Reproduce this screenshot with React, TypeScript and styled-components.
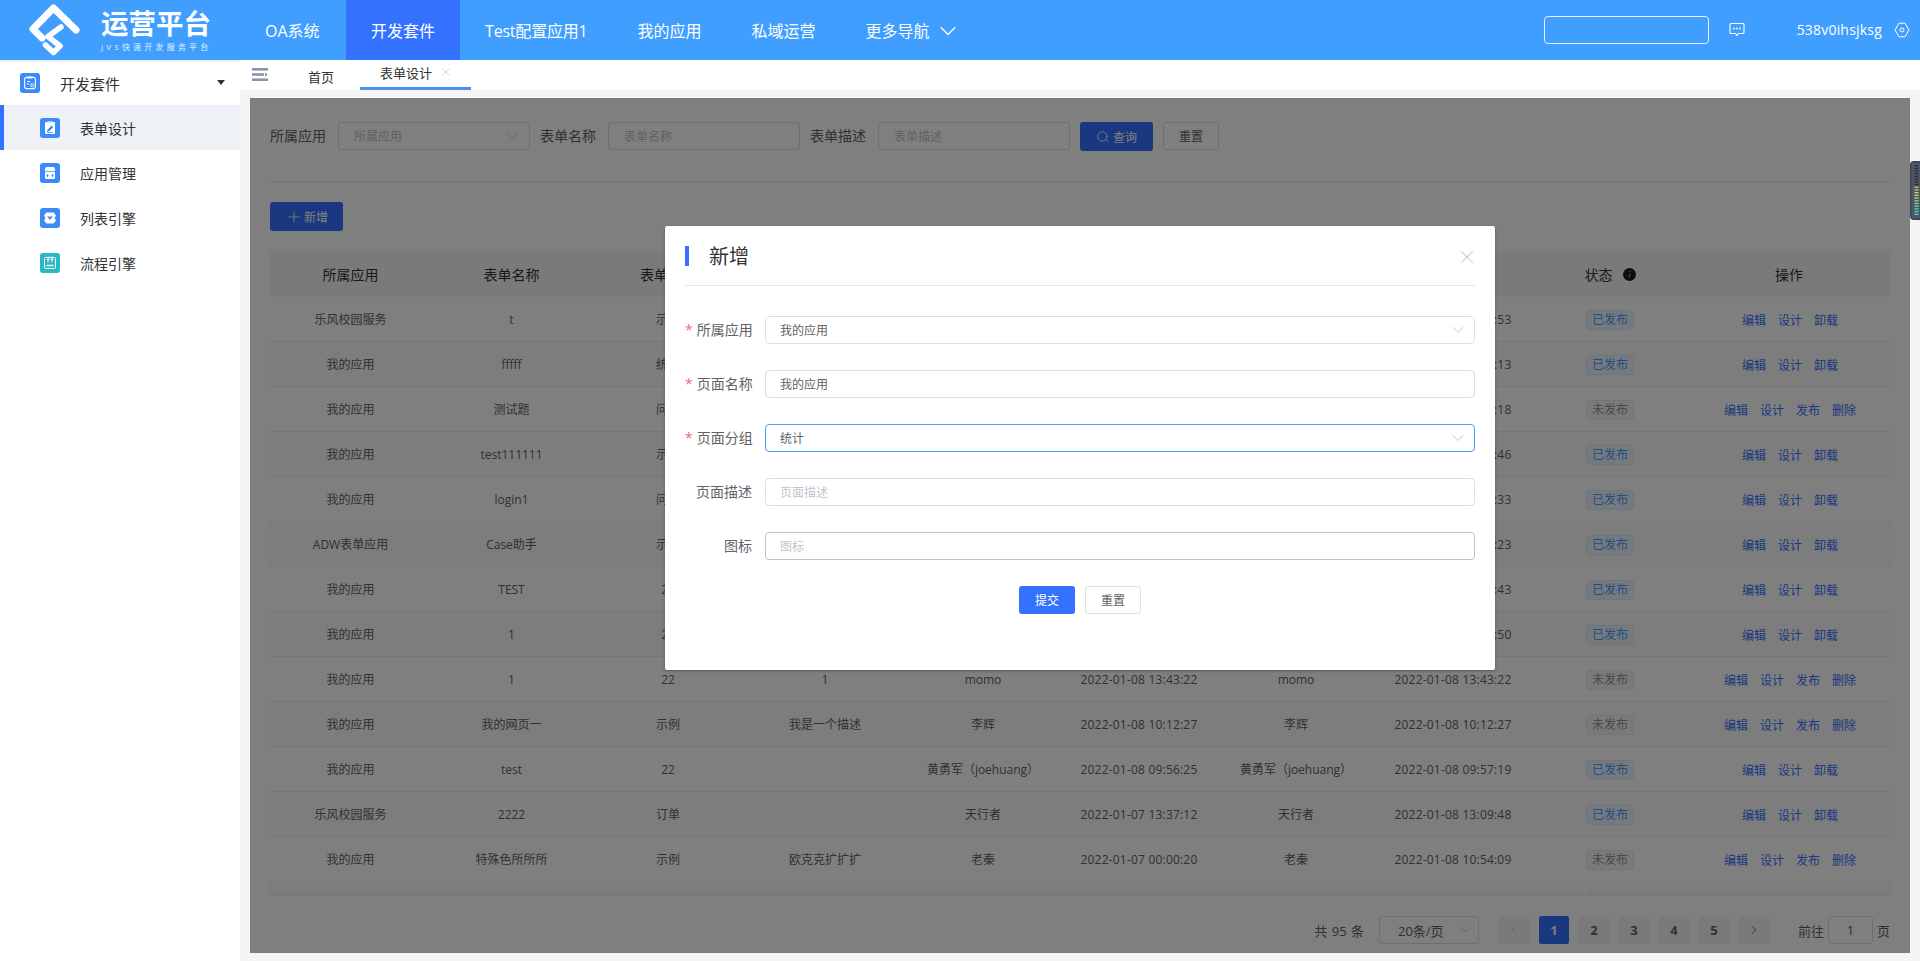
import React from 'react';
import styled, { createGlobalStyle } from 'styled-components';
import { ChevronDown, ChevronLeft, ChevronRight, Plus, Search, X } from 'lucide-react';

const FONT = `"Open Sans", "Noto Sans CJK SC", sans-serif`;
const PRIMARY = '#3471ff';
const COLUMNS = '161px 161px 152px 162px 154px 158px 156px 158px 156px 202px';

const Global = createGlobalStyle`
  * { box-sizing: border-box; }
  html, body { margin: 0; padding: 0; height: 100%; }
  body { font-family: ${FONT}; background: #f5f5f5; overflow: hidden; }
`;

const Page = styled.div`
  width: 1920px;
  height: 961px;
  display: grid;
  grid-template-rows: 60px 1fr;
  grid-template-columns: 240px 1fr;
  position: relative;
  overflow: hidden;
`;

const Header = styled.header`
  grid-column: 1 / 3;
  background: #409eff;
  display: flex;
  align-items: stretch;
  color: #fff;
`;
const LogoBox = styled.div`
  width: 240px;
  display: flex;
  align-items: center;
  padding-left: 29px;
  gap: 21px;
`;
const LogoText = styled.div`
  display: flex;
  flex-direction: column;
  margin-top: 1px;
`;
const LogoTitle = styled.div`
  font-size: 27.5px;
  font-weight: 700;
  line-height: 30px;
  white-space: nowrap;
`;
const LogoSub = styled.div`
  font-size: 8px;
  line-height: 10px;
  margin-top: 3px;
  letter-spacing: 3.2px;
  white-space: nowrap;
  opacity: 0.85;
`;
const NavItem = styled.div<{ $active?: boolean; $min?: number; $spacing?: number }>`
  display: flex;
  align-items: center;
  gap: 4px;
  min-width: ${p => p.$min ?? 0}px;
  padding: 1px 25px 0;
  font-size: 16px;
  line-height: 24px;
  letter-spacing: ${p => p.$spacing ?? 0}px;
  white-space: nowrap;
  background: ${p => (p.$active ? PRIMARY : 'transparent')};
`;
const HeaderRight = styled.div`
  margin-left: auto;
  display: flex;
  align-items: center;
  padding-right: 10px;
`;
const HeaderSearch = styled.div`
  width: 165px;
  height: 28px;
  border: 1px solid #e8f2ff;
  border-radius: 4px;
  margin-right: 20px;
`;
const UserName = styled.div`
  font-size: 14px;
  line-height: 20px;
  letter-spacing: 0.2px;
  margin-left: 52px;
  margin-right: 12px;
  white-space: nowrap;
`;

const Sidebar = styled.aside`
  background: #fff;
  box-shadow: inset 0 3px 3px -2px rgba(0, 0, 0, 0.12);
`;
const SideGroup = styled.div`
  height: 45px;
  display: flex;
  align-items: center;
  padding: 0 15px 0 20px;
  font-size: 15px;
  color: #333;
  gap: 20px;
`;
const GroupName = styled.span`
  padding-top: 2px;
`;
const Caret = styled.div`
  margin-left: auto;
  width: 0;
  height: 0;
  border-left: 4.5px solid transparent;
  border-right: 4.5px solid transparent;
  border-top: 5px solid #303133;
`;
const SideItem = styled.div<{ $active?: boolean }>`
  height: 45px;
  display: flex;
  align-items: center;
  padding-left: ${p => (p.$active ? '36px' : '40px')};
  gap: 20px;
  font-size: 14px;
  color: #333;
  background: ${p => (p.$active ? '#eef1f6' : 'transparent')};
  border-left: ${p => (p.$active ? `4px solid ${PRIMARY}` : 'none')};
`;

const Main = styled.main`
  display: flex;
  flex-direction: column;
  min-width: 0;
`;
const TabBar = styled.div`
  height: 30px;
  background: #fff;
  display: flex;
  align-items: stretch;
  padding-left: 12px;
`;
const Toggler = styled.div`
  width: 16px;
  display: flex;
  align-items: flex-start;
  padding-top: 8px;
  margin-right: 20px;
`;
const Tab = styled.div<{ $active?: boolean }>`
  display: flex;
  align-items: center;
  gap: 8px;
  padding: ${p => (p.$active ? '0 19px 3px 20px' : '2px 0 0 20px')};
  margin-right: ${p => (p.$active ? '0' : '26px')};
  font-size: 13px;
  color: #333;
  border-bottom: ${p => (p.$active ? '3px solid #4a90f0' : 'none')};
`;
const Content = styled.div`
  flex: 1;
  padding: 8px 10px 8px;
`;
const Panel = styled.section`
  position: relative;
  height: 855px;
  background: #fff;
  padding: 24px 20px 0;
`;
const SearchRow = styled.div`
  display: flex;
  align-items: flex-start;
  height: 29px;
`;
const FieldLabel = styled.div`
  width: 56px;
  margin-right: 12px;
  font-size: 14px;
  line-height: 28px;
  color: #606266;
  white-space: nowrap;
`;
const SearchField = styled.div`
  width: 192px;
  height: 28px;
  margin-right: 10px;
  border: 1px solid #dcdfe6;
  border-radius: 4px;
  padding: 0 6px 0 15px;
  display: flex;
  align-items: center;
  justify-content: space-between;
  font-size: 12px;
  color: #c0c4cc;
`;
const PrimaryButton = styled.div<{ $w: number; $gap?: number }>`
  width: ${p => p.$w}px;
  height: 29px;
  background: ${PRIMARY};
  border-radius: 3px;
  display: flex;
  align-items: center;
  justify-content: center;
  gap: ${p => p.$gap ?? 0}px;
  color: #fff;
  font-size: 12px;
`;
const PlainButton = styled.div<{ $w: number; $ml?: number }>`
  width: ${p => p.$w}px;
  height: 28px;
  margin-left: ${p => p.$ml ?? 0}px;
  background: #fff;
  border: 1px solid #dcdfe6;
  border-radius: 3px;
  display: flex;
  align-items: center;
  justify-content: center;
  color: #606266;
  font-size: 12px;
`;
const Divider = styled.div`
  height: 1px;
  background: #e6e6e6;
  margin: 30px 0 20px;
`;
const TableHead = styled.div`
  display: grid;
  grid-template-columns: ${COLUMNS};
  height: 46px;
  margin-top: 20px;
  background: #f5f5f5;
  font-size: 14px;
  color: #333;
  align-items: center;
  text-align: center;
`;
const HeadCell = styled.div`
  display: flex;
  align-items: center;
  justify-content: center;
  gap: 10px;
`;
const TableBody = styled.div`
  height: 599px;
  overflow: hidden;
  border-bottom: 1px solid #ebeef5;
`;
const Row = styled.div<{ $even?: boolean }>`
  display: grid;
  grid-template-columns: ${COLUMNS};
  height: 45px;
  flex: none;
  border-bottom: 1px solid #ebeef5;
  background: ${p => (p.$even ? '#fafafa' : '#fff')};
  align-items: center;
  text-align: center;
  font-size: 12px;
  color: #606266;
`;
const Cell = styled.div<{ $date?: boolean }>`
  white-space: nowrap;
  line-height: 18px;
  padding-top: 2px;
  letter-spacing: ${p => (p.$date ? '0.2px' : '0')};
`;
const TagCell = styled.div`
  line-height: 18px;
  padding-top: 1px;
`;
const StatusTag = styled.span<{ $on: boolean }>`
  display: inline-block;
  width: 48px;
  height: 20px;
  line-height: 18px;
  border-radius: 4px;
  font-size: 12px;
  border: 1px solid ${p => (p.$on ? '#d9ecff' : '#e9e9eb')};
  background: ${p => (p.$on ? '#ecf5ff' : '#f4f4f5')};
  color: ${p => (p.$on ? '#409eff' : '#909399')};
`;
const Actions = styled.div`
  display: flex;
  justify-content: center;
  gap: 12px;
  padding: 2px 0 0 2px;
  color: ${PRIMARY};
`;
const Pager = styled.div`
  display: flex;
  align-items: center;
  justify-content: flex-end;
  margin-top: 20px;
  height: 28px;
  font-size: 13px;
  color: #606266;
`;
const Total = styled.span`
  word-spacing: 1px;
  white-space: nowrap;
`;
const PageSelect = styled.div`
  width: 100px;
  height: 28px;
  margin: 0 20px 0 15px;
  border: 1px solid #dcdfe6;
  border-radius: 3px;
  padding: 0 3px 0 18px;
  display: flex;
  align-items: center;
  justify-content: space-between;
  white-space: nowrap;
`;
const PageBtn = styled.div<{ $active?: boolean; $muted?: boolean; $last?: boolean }>`
  width: 30px;
  height: 28px;
  margin-right: ${p => (p.$last ? 0 : 10)}px;
  border-radius: 2px;
  display: flex;
  align-items: center;
  justify-content: center;
  font-weight: 700;
  background: ${p => (p.$active ? PRIMARY : '#f4f4f5')};
  color: ${p => (p.$active ? '#fff' : p.$muted ? '#c0c4cc' : '#606266')};
`;
const PageJump = styled.div`
  width: 45px;
  height: 28px;
  margin: 0 4px;
  border: 1px solid #dcdfe6;
  border-radius: 3px;
  display: flex;
  align-items: center;
  justify-content: center;
`;
const Jump = styled.span`
  margin-left: 29px;
`;

const Overlay = styled.div`
  position: absolute;
  inset: 0;
  background: rgba(0, 0, 0, 0.5);
`;
const Modal = styled.div`
  position: absolute;
  left: 415px;
  top: 128px;
  width: 830px;
  height: 444px;
  background: #fff;
  border-radius: 2px;
  box-shadow: 0 1px 3px rgba(0, 0, 0, 0.3);
  padding: 0 20px;
`;
const ModalHead = styled.div`
  height: 60px;
  display: flex;
  align-items: center;
  border-bottom: 1px solid #e4e7ed;
`;
const TitleBar = styled.div`
  width: 4px;
  height: 20px;
  background: ${PRIMARY};
  margin-right: 20px;
`;
const ModalTitle = styled.div`
  font-size: 20px;
  line-height: 28px;
  margin-top: 2px;
  color: #333;
`;
const CloseBox = styled.div`
  margin-left: auto;
  margin-right: -3px;
  margin-top: 2px;
  display: flex;
  color: #c0c4cc;
`;
const Form = styled.div`
  padding-top: 30px;
  display: flex;
  flex-direction: column;
  gap: 26px;
`;
const FormRow = styled.div`
  display: flex;
  align-items: center;
  height: 28px;
`;
const FormLabel = styled.div`
  width: 67px;
  margin-right: 13px;
  text-align: right;
  font-size: 14px;
  line-height: 20px;
  color: #606266;
  white-space: nowrap;
`;
const Star = styled.span`
  color: #f56c6c;
  margin-right: 4px;
`;
const FormField = styled.div<{ $tone?: 'focus' | 'hover'; $empty?: boolean }>`
  flex: 1;
  height: 28px;
  border: 1px solid ${p => (p.$tone === 'focus' ? '#409eff' : p.$tone === 'hover' ? '#c0c4cc' : '#dcdfe6')};
  border-radius: 4px;
  padding: 0 6px 0 14px;
  display: flex;
  align-items: center;
  justify-content: space-between;
  font-size: 12px;
  color: ${p => (p.$empty ? '#c0c4cc' : '#606266')};
`;
const FormActions = styled.div`
  display: flex;
  justify-content: center;
  gap: 10px;
`;
const SubmitButton = styled(PrimaryButton)`
  height: 28px;
`;
const Widget = styled.div`
  position: absolute;
  right: 0;
  top: 161px;
  width: 10px;
  height: 59px;
  display: flex;
`;

const Arrow = ({ size = 20 }: { size?: number }) => (
  <ChevronDown size={size} strokeWidth={1.1} color="#c0c4cc" />
);

const Logo = () => (
  <svg width="51" height="52" viewBox="29 4 51 52" fill="none" stroke="#fff" strokeLinecap="round" strokeLinejoin="round">
    <polyline strokeWidth="7" points="76,30 53.5,8 33,29 42,38" />
    <polyline strokeWidth="5.5" points="61,27 48,36.500 60,46 53.500,52.500 45.500,45" />
  </svg>
);

const IconSquare = ({ bg = '#3a8bf7', children }: { bg?: string; children: React.ReactNode }) => (
  <svg width="20" height="20" viewBox="0 0 20 20">
    <rect width="20" height="20" rx="3" fill={bg} />
    {children}
  </svg>
);

const GroupIcon = () => (
  <IconSquare>
    <rect x="4.6" y="4.4" width="10.8" height="11.2" rx="2" fill="none" stroke="#fff" strokeWidth="1.1" />
    <rect x="7.5" y="3.4" width="5" height="2" rx=".6" fill="#fff" />
    <path d="M7 8.5h3M7 11h2" stroke="#fff" strokeWidth="1" />
    <circle cx="12.2" cy="12.2" r="1.6" fill="#3a8bf7" stroke="#fff" strokeWidth=".9" />
  </IconSquare>
);
const FormIcon = () => (
  <IconSquare>
    <rect x="5" y="4" width="10" height="12" rx="1" fill="#fff" />
    <rect x="7.5" y="3.2" width="5" height="1.6" fill="#cfe2ff" />
    <path d="M6.8 14l1-2.6 3.8-3.8 1.6 1.6-3.8 3.8z" fill="#3a8bf7" />
    <path d="M7 14.4h6" stroke="#3a8bf7" strokeWidth=".8" />
  </IconSquare>
);
const AppIcon = () => (
  <IconSquare>
    <path d="M5 8.2V6a2 2 0 0 1 2-2h6a2 2 0 0 1 2 2v2.2z" fill="#fff" />
    <rect x="5" y="9" width="10" height="7" rx="1" fill="#fff" />
    <path d="M7.5 11v3M12.5 11v3M6.5 12.5h2M11.5 12.5h2" stroke="#3a8bf7" strokeWidth=".9" />
  </IconSquare>
);
const ListIcon = () => (
  <IconSquare>
    <path d="M6.5 4.5h7l2.5 3-1.5 2.5 1.500 2.500-2.500 3h-7l-2.500-3 1.500-2.500L4 7.500z" fill="#fff" />
    <path d="M7 8.5h6L10 12z" fill="#3a8bf7" />
  </IconSquare>
);
const FlowIcon = () => (
  <IconSquare bg="#2bb8c4">
    <rect x="4.5" y="4.500" width="11" height="11" rx="1" fill="none" stroke="#fff" strokeWidth="1" />
    <path d="M8 3.500v6M12 3.500v6M6.500 6.500h3M10.500 6.500h3" stroke="#fff" strokeWidth="1" />
    <path d="M6.500 12.500h7" stroke="#fff" strokeWidth="1.600" />
  </IconSquare>
);

const ChatIcon = () => (
  <svg width="16" height="16" viewBox="0 0 16 16" fill="none">
    <path d="M2 1.500h12a1 1 0 0 1 1 1v8a1 1 0 0 1-1 1h-4.500L8 13.500l-1.500-2H2a1 1 0 0 1-1-1v-8a1 1 0 0 1 1-1z" stroke="#fff" strokeWidth="1.100" />
    <circle cx="5" cy="6.500" r=".9" fill="#fff" />
    <circle cx="8" cy="6.500" r=".9" fill="#fff" />
    <circle cx="11" cy="6.500" r=".9" fill="#fff" />
  </svg>
);
const HexIcon = () => (
  <svg width="16" height="16" viewBox="0 0 16 16" fill="none" stroke="#fff" strokeWidth="1">
    <path d="M5 1.200h6L15 8l-4 6.800H5L1 8z" strokeLinejoin="round" />
    <circle cx="8" cy="8" r="2" />
  </svg>
);
const TogglerIcon = () => (
  <svg width="16" height="14" viewBox="0 0 16 14" fill="#8d93a8">
    <rect x="0" y="0" width="16" height="2.600" />
    <rect x="0" y="5.200" width="12" height="2.600" />
    <rect x="0" y="10.400" width="16" height="2.600" />
    <path d="M13 4.400l3 2.100-3 2.100z" />
  </svg>
);
const InfoIcon = () => (
  <svg width="13" height="13" viewBox="0 0 13 13">
    <circle cx="6.500" cy="6.500" r="6.500" fill="#1c1c1c" />
    <path d="M6.200 5.400h1.300L6.800 9.800H5.600zM6.800 2.800h1.300l-.2 1.500H6.600z" fill="#8a8a8a" />
  </svg>
);
const MeterWidget = () => {
  const bars = [
    '#2a2d38', '#2a2d38', '#2a2d38', '#2a2d38', '#2a2d38', '#2a2d38', '#2a2d38', '#2a2d38',
    '#e0c938', '#e0c938', '#d8d846', '#c6dc52', '#acdf5e', '#8fe26c', '#74e47c', '#5ce48e', '#4ae2a2', '#3fe0b6', '#3ce0c4',
  ];
  return (
    <svg width="10" height="59" viewBox="0 0 10 59">
      <path d="M10 0H4a4 4 0 0 0-4 4v51a4 4 0 0 0 4 4h6z" fill="#3c4052" />
      <path d="M10 1.500H4A2.500 2.500 0 0 0 1.500 4v51A2.500 2.500 0 0 0 4 57.500h6z" fill="#50566a" />
      {bars.map((c, i) => (
        <rect key={i} x="4.500" y={4 + i * 2.700} width="4" height="1.300" fill={c} />
      ))}
    </svg>
  );
};

type Rec = [string, string, string, string, string, string, string, string, boolean];
const rows: Rec[] = [
  ['乐风校园服务', 't', '示例', '', 'momo', '2022-01-20 10:20:53', 'momo', '2022-01-20 10:20:53', true],
  ['我的应用', 'fffff', '统计', '', 'momo', '2022-01-19 16:03:13', 'momo', '2022-01-19 16:03:13', true],
  ['我的应用', '测试题', '问题', '', 'momo', '2022-01-18 11:26:18', 'momo', '2022-01-18 11:26:18', false],
  ['我的应用', 'test111111', '示例', '', 'momo', '2022-01-14 15:12:46', 'momo', '2022-01-14 15:12:46', true],
  ['我的应用', 'login1', '问题', '', 'momo', '2022-01-13 09:48:33', 'momo', '2022-01-13 09:48:33', true],
  ['ADW表单应用', 'Case助手', '示例', '', 'momo', '2022-01-12 17:31:23', 'momo', '2022-01-12 17:31:23', true],
  ['我的应用', 'TEST', '22', '', 'momo', '2022-01-11 14:05:43', 'momo', '2022-01-11 14:05:43', true],
  ['我的应用', '1', '22', '', 'momo', '2022-01-10 10:40:50', 'momo', '2022-01-10 10:40:50', true],
  ['我的应用', '1', '22', '1', 'momo', '2022-01-08 13:43:22', 'momo', '2022-01-08 13:43:22', false],
  ['我的应用', '我的网页一', '示例', '我是一个描述', '李辉', '2022-01-08 10:12:27', '李辉', '2022-01-08 10:12:27', false],
  ['我的应用', 'test', '22', '', '黄勇军（joehuang）', '2022-01-08 09:56:25', '黄勇军（joehuang）', '2022-01-08 09:57:19', true],
  ['乐风校园服务', '2222', '订单', '', '天行者', '2022-01-07 13:37:12', '天行者', '2022-01-08 13:09:48', true],
  ['我的应用', '特殊色所所所', '示例', '欧克克扩扩扩', '老秦', '2022-01-07 00:00:20', '老秦', '2022-01-08 10:54:09', false],
];
const heads = ['所属应用', '表单名称', '表单类型', '表单描述', '创建人', '创建时间', '修改人', '修改时间'];
const sideItems: [string, React.ReactNode][] = [
  ['表单设计', <FormIcon key="f" />],
  ['应用管理', <AppIcon key="a" />],
  ['列表引擎', <ListIcon key="l" />],
  ['流程引擎', <FlowIcon key="w" />],
];

export default function App() {
  return (
    <Page>
      <Global />
      <Header>
        <LogoBox>
          <Logo />
          <LogoText>
            <LogoTitle>运营平台</LogoTitle>
            <LogoSub>JVS快速开发服务平台</LogoSub>
          </LogoText>
        </LogoBox>
        <NavItem $min={106}>OA系统</NavItem>
        <NavItem $active>开发套件</NavItem>
        <NavItem $spacing={-0.2}>Test配置应用1</NavItem>
        <NavItem>我的应用</NavItem>
        <NavItem>私域运营</NavItem>
        <NavItem>更多导航<ChevronDown size={28} strokeWidth={1.1} /></NavItem>
        <HeaderRight>
          <HeaderSearch />
          <ChatIcon />
          <UserName>538v0ihsjksg</UserName>
          <HexIcon />
        </HeaderRight>
      </Header>

      <Sidebar>
        <SideGroup><GroupIcon /><GroupName>开发套件</GroupName><Caret /></SideGroup>
        {sideItems.map(([t, icon], i) => (
          <SideItem key={t} $active={i === 0}>{icon}{t}</SideItem>
        ))}
      </Sidebar>

      <Main>
        <TabBar>
          <Toggler><TogglerIcon /></Toggler>
          <Tab>首页</Tab>
          <Tab $active>表单设计<X size={12} strokeWidth={1.5} color="#c0c4cc" /></Tab>
        </TabBar>
        <Content>
          <Panel>
            <SearchRow>
              <FieldLabel>所属应用</FieldLabel>
              <SearchField>所属应用<Arrow /></SearchField>
              <FieldLabel>表单名称</FieldLabel>
              <SearchField>表单名称</SearchField>
              <FieldLabel>表单描述</FieldLabel>
              <SearchField>表单描述</SearchField>
              <PrimaryButton $w={73} $gap={3}><Search size={14} strokeWidth={1.5} />查询</PrimaryButton>
              <PlainButton $w={56} $ml={10}>重置</PlainButton>
            </SearchRow>
            <Divider />
            <PrimaryButton $w={73} $gap={1}><Plus size={18} strokeWidth={1.1} />新增</PrimaryButton>
            <TableHead>
              {heads.map(h => <HeadCell key={h}>{h}</HeadCell>)}
              <HeadCell>状态<InfoIcon /></HeadCell>
              <HeadCell>操作</HeadCell>
            </TableHead>
            <TableBody>
              {rows.map((r, i) => (
                <Row key={i} $even={i % 2 === 1}>
                  {r.slice(0, 8).map((c, j) => <Cell key={j} $date={j === 5 || j === 7}>{c as string}</Cell>)}
                  <TagCell><StatusTag $on={r[8]}>{r[8] ? '已发布' : '未发布'}</StatusTag></TagCell>
                  <Actions>
                    <span>编辑</span>
                    <span>设计</span>
                    {r[8] ? <span>卸载</span> : <><span>发布</span><span>删除</span></>}
                  </Actions>
                </Row>
              ))}
              <Row $even>
                <Cell /><Cell /><Cell /><Cell /><Cell /><Cell /><Cell /><Cell />
                <TagCell><StatusTag $on /></TagCell>
                <Actions />
              </Row>
            </TableBody>
            <Pager>
              <Total>共 95 条</Total>
              <PageSelect>20条/页<Arrow size={18} /></PageSelect>
              <PageBtn $muted><ChevronLeft size={14} strokeWidth={1.5} /></PageBtn>
              <PageBtn $active>1</PageBtn>
              <PageBtn>2</PageBtn>
              <PageBtn>3</PageBtn>
              <PageBtn>4</PageBtn>
              <PageBtn>5</PageBtn>
              <PageBtn $last><ChevronRight size={14} strokeWidth={1.5} /></PageBtn>
              <Jump>前往</Jump>
              <PageJump>1</PageJump>
              <span>页</span>
            </Pager>
            <Overlay />
            <Modal>
              <ModalHead>
                <TitleBar />
                <ModalTitle>新增</ModalTitle>
                <CloseBox><X size={22} strokeWidth={1.1} /></CloseBox>
              </ModalHead>
              <Form>
                <FormRow>
                  <FormLabel><Star>*</Star>所属应用</FormLabel>
                  <FormField>我的应用<Arrow /></FormField>
                </FormRow>
                <FormRow>
                  <FormLabel><Star>*</Star>页面名称</FormLabel>
                  <FormField>我的应用</FormField>
                </FormRow>
                <FormRow>
                  <FormLabel><Star>*</Star>页面分组</FormLabel>
                  <FormField $tone="focus">统计<Arrow /></FormField>
                </FormRow>
                <FormRow>
                  <FormLabel>页面描述</FormLabel>
                  <FormField $empty>页面描述</FormField>
                </FormRow>
                <FormRow>
                  <FormLabel>图标</FormLabel>
                  <FormField $empty $tone="hover">图标</FormField>
                </FormRow>
                <FormActions>
                  <SubmitButton $w={56}>提交</SubmitButton>
                  <PlainButton $w={56}>重置</PlainButton>
                </FormActions>
              </Form>
            </Modal>
          </Panel>
        </Content>
      </Main>
      <Widget><MeterWidget /></Widget>
    </Page>
  );
}
